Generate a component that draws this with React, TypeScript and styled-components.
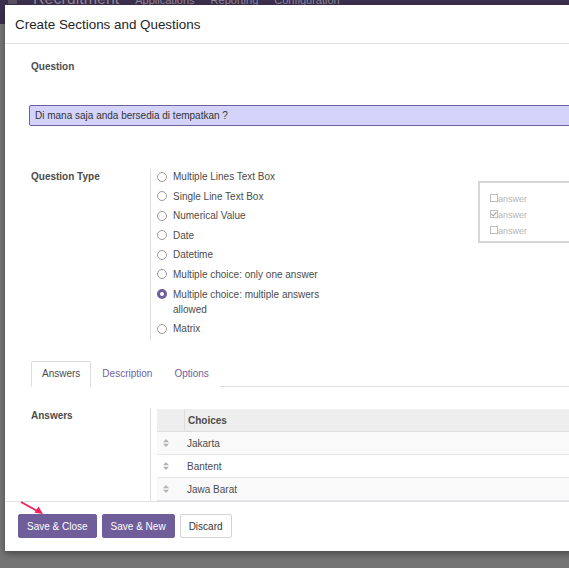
import React from 'react';
import styled, { createGlobalStyle } from 'styled-components';

const GlobalStyle = createGlobalStyle`
  html, body {
    margin: 0;
    padding: 0;
  }
  body {
    font-family: "Liberation Sans", Arial, sans-serif;
    font-size: 10px;
    color: #4c4c4c;
  }
`;

const Page = styled.div`
  position: relative;
  width: 569px;
  height: 568px;
  overflow: hidden;
  background: #747474;
`;

const Navbar = styled.div`
  display: flex;
  align-items: flex-start;
  height: 24px;
  padding-left: 8px;
  background: #3c2f4e;
  color: #8c8696;
  overflow: hidden;
`;

const AppIcon = styled.span`
  width: 9px;
  height: 4px;
  margin-right: 16px;
  background: #5a5063;
`;

const NavBrand = styled.span`
  font-size: 16px;
  line-height: 10px;
  margin: -6px 16px 0 0;
`;

const NavLink = styled.span`
  font-size: 11px;
  line-height: 10px;
  margin: -5px 16px 0 0;
`;

const Modal = styled.div`
  position: absolute;
  left: 5px;
  top: 5px;
  width: 600px;
  height: 546px;
  display: flex;
  flex-direction: column;
  background: #fff;
  box-shadow: 0 3px 6px rgba(0, 0, 0, 0.35);
`;

const Header = styled.div`
  height: 38px;
  display: flex;
  align-items: center;
  padding-left: 10px;
  border-bottom: 1px solid #dee2e6;
`;

const Title = styled.h4`
  margin: 0;
  font-size: 13.4px;
  font-weight: normal;
  color: #212529;
`;

const Body = styled.div`
  flex: 1;
  overflow: hidden;
  padding: 0 0 0 24px;
`;

const Label = styled.div`
  padding-left: 2px;
  font-weight: bold;
  line-height: 15px;
  color: #4c4c4c;
`;

const QuestionBlock = styled.div`
  padding-top: 15px;
`;

const QuestionInput = styled.div`
  margin-top: 31px;
  height: 19px;
  line-height: 19px;
  padding-left: 5px;
  background: #d3d3fc;
  border: 1px solid #6f5f9b;
  border-radius: 2px;
  color: #333;
`;

const Group = styled.div<{ $top: number }>`
  display: grid;
  grid-template-columns: 121px 190px auto;
  margin-top: ${(p) => p.$top}px;
`;

const FieldCol = styled.div<{ $wide?: boolean }>`
  grid-column: ${(p) => (p.$wide ? '2 / 4' : 'auto')};
  border-left: 1px solid #ddd;
  padding-left: 6px;
`;

const RadioList = styled.div`
  display: flex;
  flex-direction: column;
  gap: 4.6px;
  padding-bottom: 4px;
`;

const RadioRow = styled.label`
  display: flex;
  align-items: flex-start;
  gap: 6px;
  line-height: 15px;
  color: #4c4c4c;
`;

const Radio = styled.span<{ $checked?: boolean }>`
  flex: none;
  box-sizing: border-box;
  width: 10px;
  height: 10px;
  margin-top: 2.5px;
  border-radius: 50%;
  background: #fff;
  border: ${(p) => (p.$checked ? '3px solid #6f5f9b' : '1px solid #9a9a9a')};
`;

const Preview = styled.div`
  margin: 12px 0 0 138px;
  width: 120px;
  height: 62px;
  box-sizing: border-box;
  border: 2px solid #d6d6d6;
  padding: 8px 0 0 10px;
`;

const PreviewRow = styled.div`
  display: flex;
  align-items: center;
  height: 16px;
  font-size: 9px;
  color: #b5b5b5;
`;

const PreviewBox = styled.span`
  width: 8px;
  height: 8px;
  box-sizing: border-box;
  border: 1px solid #bdbdbd;
  display: flex;
  align-items: center;
  justify-content: center;
  margin-top: -3px;
`;

const Tabs = styled.div`
  display: flex;
  margin: 21px 0 0 2px;
  border-bottom: 1px solid #ddd;
`;

const Tab = styled.div<{ $active?: boolean }>`
  height: 24px;
  line-height: 24px;
  padding: 0 10px;
  margin-bottom: -1px;
  color: ${(p) => (p.$active ? '#4c4c4c' : '#6f5f9b')};
  background: #fff;
  border: 1px solid ${(p) => (p.$active ? '#ddd' : 'transparent')};
  border-bottom-color: ${(p) => (p.$active ? '#fff' : 'transparent')};
  border-radius: 2px 2px 0 0;
`;

const Table = styled.div`
  display: flex;
  flex-direction: column;
  margin-top: 1px;
`;

const HeadRow = styled.div`
  display: grid;
  grid-template-columns: 27px 1fr;
  height: 22px;
  background: #eee;
  border-bottom: 1px solid #ddd;
`;

const HeadCell = styled.div<{ $divider?: boolean }>`
  display: flex;
  align-items: center;
  padding-left: 3px;
  font-weight: bold;
  color: #4c4c4c;
  border-left: ${(p) => (p.$divider ? '1px solid #ddd' : 'none')};
`;

const BodyRow = styled.div<{ $striped?: boolean }>`
  display: grid;
  grid-template-columns: 30px 1fr;
  height: 22px;
  align-items: center;
  background: ${(p) => (p.$striped ? '#f9f9f9' : '#fff')};
  border-bottom: 1px solid #e6e6e6;
  color: #4c4c4c;
`;

const Handle = styled.div`
  display: flex;
  padding-left: 6px;
`;

const Footer = styled.div`
  height: 50px;
  display: flex;
  align-items: flex-start;
  gap: 5px;
  padding: 12px 0 0 13px;
  box-sizing: border-box;
  border-top: 1px solid #dee2e6;
`;

const Button = styled.button<{ $primary?: boolean }>`
  height: 24px;
  padding: 0 8px;
  font-family: inherit;
  font-size: 10px;
  border-radius: 2px;
  cursor: pointer;
  color: ${(p) => (p.$primary ? '#fff' : '#333')};
  background: ${(p) => (p.$primary ? '#705e9b' : '#fff')};
  border: 1px solid ${(p) => (p.$primary ? '#705e9b' : '#d4d4d4')};
`;

const Arrow = styled.svg`
  position: absolute;
  left: 18px;
  top: 500px;
`;

const types = [
  'Multiple Lines Text Box',
  'Single Line Text Box',
  'Numerical Value',
  'Date',
  'Datetime',
  'Multiple choice: only one answer',
  'Multiple choice: multiple answers allowed',
  'Matrix',
];

const choices = ['Jakarta', 'Bantent', 'Jawa Barat'];

const SortIcon = () => (
  <svg width="6" height="8" viewBox="0 0 6 8">
    <path d="M3 0 L6 3.3 H0 Z M3 8 L6 4.7 H0 Z" fill="#b3b3b3" />
  </svg>
);

export default function App() {
  return (
    <Page>
      <GlobalStyle />
      <Navbar>
        <AppIcon />
        <NavBrand>Recruitment</NavBrand>
        <NavLink>Applications</NavLink>
        <NavLink>Reporting</NavLink>
        <NavLink>Configuration</NavLink>
      </Navbar>

      <Modal>
        <Header>
          <Title>Create Sections and Questions</Title>
        </Header>
        <Body>
          <QuestionBlock>
            <Label>Question</Label>
            <QuestionInput>Di mana saja anda bersedia di tempatkan ?</QuestionInput>
          </QuestionBlock>

          <Group $top={43}>
            <Label>Question Type</Label>
            <FieldCol>
              <RadioList>
                {types.map((t) => (
                  <RadioRow key={t}>
                    <Radio $checked={t === 'Multiple choice: multiple answers allowed'} />
                    <span>{t}</span>
                  </RadioRow>
                ))}
              </RadioList>
            </FieldCol>
            <Preview>
              {[false, true, false].map((c, i) => (
                <PreviewRow key={i}>
                  <PreviewBox>
                    {c && (
                      <svg width="7" height="6" viewBox="0 0 7 6">
                        <path d="M0.5 3 L2.7 5.2 L6.5 0.8" stroke="#a8a8a8" strokeWidth="1.4" fill="none" />
                      </svg>
                    )}
                  </PreviewBox>
                  answer
                </PreviewRow>
              ))}
            </Preview>
          </Group>

          <Tabs>
            <Tab $active>Answers</Tab>
            <Tab>Description</Tab>
            <Tab>Options</Tab>
          </Tabs>

          <Group $top={21}>
            <Label>Answers</Label>
            <FieldCol $wide>
              <Table>
                <HeadRow>
                  <HeadCell />
                  <HeadCell $divider>Choices</HeadCell>
                </HeadRow>
                {choices.map((c, i) => (
                  <BodyRow key={c} $striped={i % 2 === 0}>
                    <Handle>
                      <SortIcon />
                    </Handle>
                    <span>{c}</span>
                  </BodyRow>
                ))}
              </Table>
            </FieldCol>
          </Group>
        </Body>
        <Footer>
          <Button $primary>Save &amp; Close</Button>
          <Button $primary>Save &amp; New</Button>
          <Button>Discard</Button>
        </Footer>
      </Modal>

      <Arrow width="30" height="20" viewBox="0 0 30 20">
        <path d="M3 2 L22 12.5" stroke="#f0245a" strokeWidth="1.8" fill="none" />
        <path d="M25 14 L16.5 12.8 L20.5 6.5 Z" fill="#f0245a" />
      </Arrow>
    </Page>
  );
}
